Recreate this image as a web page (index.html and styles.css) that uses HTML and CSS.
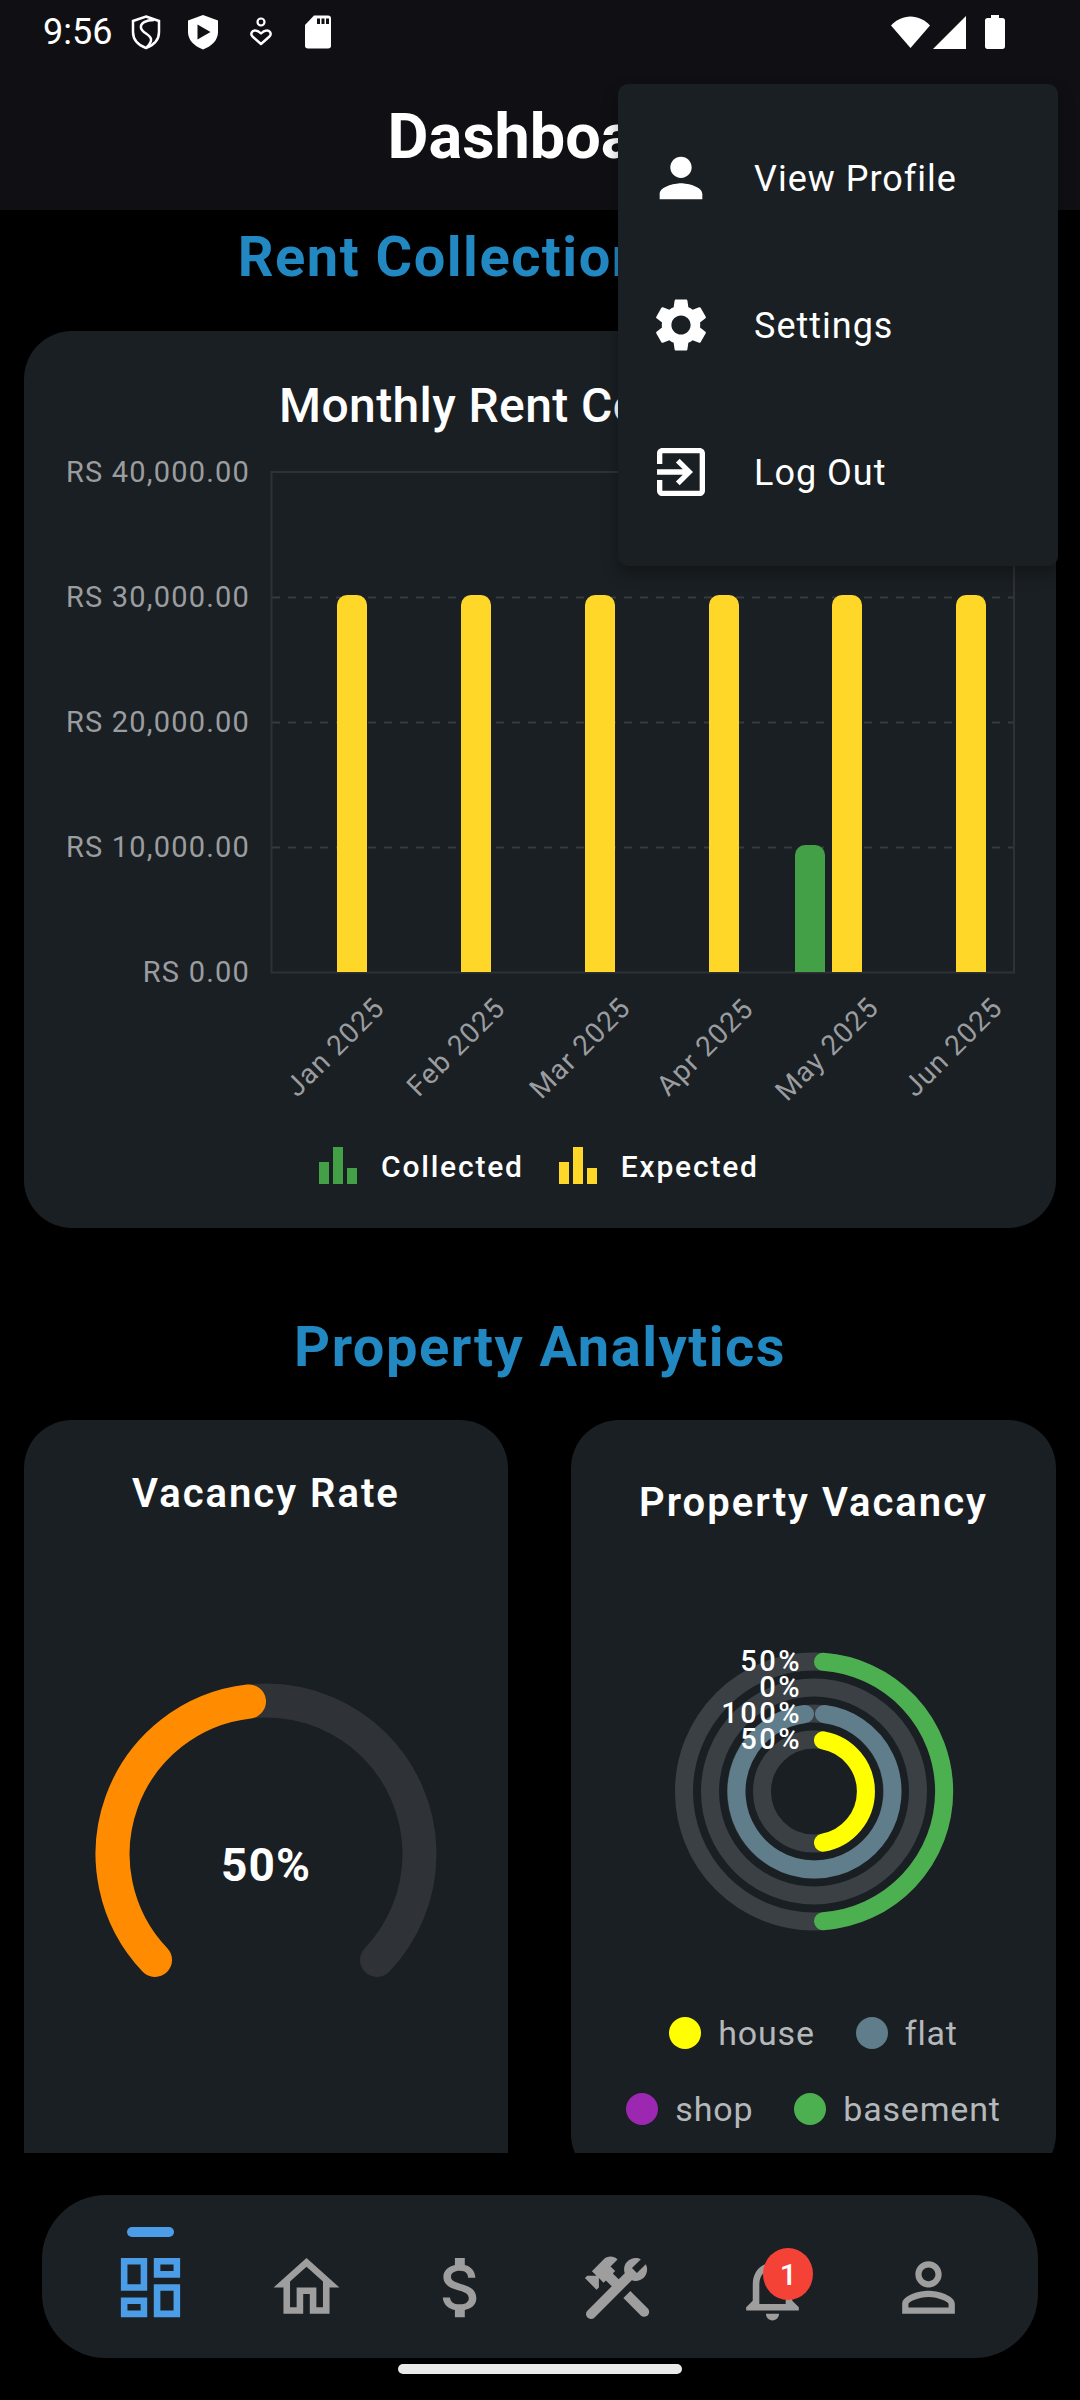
FILE: index.html
```html
<!doctype html>
<html lang="en">
<head>
  <meta charset="UTF-8">
  <title>Dashboard</title>
  <link rel="stylesheet" href="styles.css">
</head>
<body>
<div class="screen">
  <div class="header">
    <div class="status-bar">
      <span class="time">9:56</span>
      <svg class="status-icon" viewBox="0 0 40 36">
        <path d="M20 2.5L33 7V18C33 25.500 28 31 20 34C12 31 7 25.500 7 18V7Z" fill="none" stroke="#fff" stroke-width="2.500"/>
        <path d="M28 6C20 6 14 9 15 14C16 19 24 20 25 25C25.500 28 23 31 21 33" fill="none" stroke="#fff" stroke-width="2.500"/>
      </svg>
      <svg class="status-icon" viewBox="0 0 40 36">
        <path d="M20 1L35 6.500V18C35 26 29 32 20 35.500C11 32 5 26 5 18V6.500Z" fill="#fff"/>
        <path d="M14.500 10.500L27.500 18L14.500 25.500Z" fill="#101014"/>
      </svg>
      <svg class="status-icon" viewBox="0 0 40 36">
        <circle cx="20" cy="8" r="3.500" fill="none" stroke="#fff" stroke-width="2.200"/>
        <path d="M20 30L11.500 22.500C9 20 11 16 14.500 16.500C17 16.800 18.500 18 20 19.500C21.500 18 23 16.800 25.500 16.500C29 16 31 20 28.500 22.500Z" fill="none" stroke="#fff" stroke-width="2.400" stroke-linejoin="round"/>
      </svg>
      <svg class="status-icon" viewBox="0 0 40 36">
        <path d="M16 1.500H30C32 1.500 33 2.500 33 4.500V32C33 33.500 32 34.500 30 34.500H10C8 34.500 7 33.500 7 32V11Z" fill="#fff"/>
        <path d="M19 4.500H22V10H19ZM23.500 4.500H26.500V10H23.500ZM28 4.500H31V10H28Z" fill="#101014"/>
      </svg>
      <div class="status-right">
        <svg class="wifi" viewBox="0 0 39 32"><path d="M0 9.500C5 4 12 0.500 19.500 0.500C27 0.500 34 4 39 9.500L19.500 32Z" fill="#fff"/></svg>
        <svg class="signal" viewBox="0 0 33 33"><path d="M33 0V33H0Z" fill="#fff"/></svg>
        <svg class="battery" viewBox="0 0 20 34"><path d="M6 0H14V3H17.500C19 3 20 4 20 5.500V31.500C20 33 19 34 17.500 34H2.500C1 34 0 33 0 31.500V5.500C0 4 1 3 2.500 3H6Z" fill="#fff"/></svg>
      </div>
    </div>
    <div class="app-bar">Dashboard</div>
  </div>

  <div class="scroll">
    <h2 class="section-title first">Rent Collection Trends</h2>
    <div class="card chart-card">
      <h3 class="chart-title">Monthly Rent Collection</h3>
      <svg class="bar-chart" viewBox="24 450 1032 680">
        <defs>
          <clipPath id="plot-clip"><rect x="272" y="472" width="742" height="500"/></clipPath>
        </defs>
        <g class="grid">
          <line x1="272" x2="1014" y1="597.500" y2="597.500"/>
          <line x1="272" x2="1014" y1="722.500" y2="722.500"/>
          <line x1="272" x2="1014" y1="847.500" y2="847.500"/>
        </g>
        <rect class="plot-border" x="271.500" y="472" width="742.500" height="500.500"/>
        <g class="y-labels">
          <text x="250" y="472">RS 40,000.00</text>
          <text x="250" y="597">RS 30,000.00</text>
          <text x="250" y="722">RS 20,000.00</text>
          <text x="250" y="847">RS 10,000.00</text>
          <text x="250" y="972">RS 0.00</text>
        </g>
        <g clip-path="url(#plot-clip)">
          <rect class="bar-expected" x="337" y="595" width="30" height="400" rx="10"/>
          <rect class="bar-expected" x="461" y="595" width="30" height="400" rx="10"/>
          <rect class="bar-expected" x="585" y="595" width="30" height="400" rx="10"/>
          <rect class="bar-expected" x="709" y="595" width="30" height="400" rx="10"/>
          <rect class="bar-collected" x="795" y="845" width="30" height="150" rx="10"/>
          <rect class="bar-expected" x="832" y="595" width="30" height="400" rx="10"/>
          <rect class="bar-expected" x="956" y="595" width="30" height="400" rx="10"/>
        </g>
        <g class="x-labels">
          <text transform="rotate(-45 335 1047)" x="335" y="1047">Jan 2025</text>
          <text transform="rotate(-45 456 1047)" x="456" y="1047">Feb 2025</text>
          <text transform="rotate(-45 580 1048)" x="580" y="1048">Mar 2025</text>
          <text transform="rotate(-45 705 1047)" x="705" y="1047">Apr 2025</text>
          <text transform="rotate(-45 827 1049)" x="827" y="1049">May 2025</text>
          <text transform="rotate(-45 953 1047)" x="953" y="1047">Jun 2025</text>
        </g>
      </svg>
      <div class="bar-legend">
        <div class="bar-legend-item">
          <svg class="bar-legend-icon collected" viewBox="0 0 38 37"><path d="M0 15H10V37H0ZM14 0H24V37H14ZM28 21H38V37H28Z"/></svg>
          <span>Collected</span>
        </div>
        <div class="bar-legend-item">
          <svg class="bar-legend-icon expected" viewBox="0 0 38 37"><path d="M0 15H10V37H0ZM14 0H24V37H14ZM28 21H38V37H28Z"/></svg>
          <span>Expected</span>
        </div>
      </div>
    </div>

    <h2 class="section-title second">Property Analytics</h2>
    <div class="analytics">
      <div class="card vacancy-card">
        <h3 class="small-title">Vacancy Rate</h3>
        <svg class="gauge" viewBox="24 1660 484 340">
          <path class="gauge-track" d="M155 1960A153.500 153.500 0 1 1 377 1960"/>
          <path class="gauge-value" d="M155 1960A153.500 153.500 0 0 1 249 1701.500"/>
          <text class="gauge-text" x="266" y="1865">50%</text>
        </svg>
      </div>
      <div class="card property-card">
        <h3 class="small-title">Property Vacancy</h3>
        <svg class="radial" viewBox="571 1640 485 310">
          <circle class="ring-track" cx="814" cy="1791.500" r="130"/>
          <circle class="ring-track" cx="814" cy="1791.500" r="104"/>
          <circle class="ring-track" cx="814" cy="1791.500" r="78"/>
          <circle class="ring-track" cx="814" cy="1791.500" r="52"/>
          <path class="ring basement" d="M823 1661.800A130 130 0 0 1 823 1921.200"/>
          <path class="ring flat" d="M824 1714A78 78 0 1 1 805 1714"/>
          <path class="ring house" d="M823 1740.300A52 52 0 0 1 823 1842.700"/>
          <g class="ring-labels">
            <text x="802" y="1661">50%</text>
            <text x="802" y="1687">0%</text>
            <text x="802" y="1712.500">100%</text>
            <text x="802" y="1738.500">50%</text>
          </g>
        </svg>
        <div class="legend-row first-row">
          <div class="legend-item"><i class="dot dot-house"></i>house</div>
          <div class="legend-item"><i class="dot dot-flat"></i>flat</div>
        </div>
        <div class="legend-row">
          <div class="legend-item"><i class="dot dot-shop"></i>shop</div>
          <div class="legend-item"><i class="dot dot-basement"></i>basement</div>
        </div>
      </div>
    </div>
  </div>

  <div class="bottom-nav">
    <div class="nav-item active">
      <div class="nav-mark"></div>
      <svg class="nav-icon" viewBox="0 0 24 24"><path d="M19 5v2h-4V5h4M9 5v6H5V5h4m10 8v6h-4v-6h4M9 17v2H5v-2h4M21 3h-8v6h8V3zM11 3H3v10h8V3zm10 8h-8v10h8V11zm-10 4H3v6h8v-6z"/></svg>
    </div>
    <div class="nav-item">
      <div class="nav-mark"></div>
      <svg class="nav-icon" viewBox="0 0 24 24"><path d="M12 5.690l5 4.500V18h-2v-6H9v6H7v-7.810l5-4.500M12 3L2 12h3v8h6v-6h2v6h6v-8h3L12 3z"/></svg>
    </div>
    <div class="nav-item">
      <div class="nav-mark"></div>
      <svg class="nav-icon" viewBox="0 0 24 24"><path d="M11.800 10.900c-2.270-.590-3-1.200-3-2.150 0-1.090 1.010-1.850 2.700-1.850 1.780 0 2.440.850 2.500 2.100h2.210c-.070-1.720-1.120-3.300-3.210-3.810V3h-3v2.160c-1.940.420-3.500 1.680-3.500 3.610 0 2.310 1.910 3.460 4.700 4.130 2.500.600 3 1.480 3 2.410 0 .690-.490 1.790-2.700 1.790-2.060 0-2.870-.920-2.980-2.100h-2.200c.120 2.190 1.760 3.420 3.680 3.830V21h3v-2.150c1.950-.370 3.500-1.500 3.500-3.550 0-2.840-2.430-3.810-4.700-4.400z"/></svg>
    </div>
    <div class="nav-item">
      <div class="nav-mark"></div>
      <svg class="nav-icon" viewBox="0 0 24 24"><path d="M13.783 15.172l2.121-2.121 5.300 5.300a1.500 1.500 0 0 1-2.121 2.121z"/><path d="M17.500 10c1.930 0 3.500-1.570 3.500-3.500 0-.580-.160-1.120-.410-1.600l-2.700 2.700-1.490-1.490 2.700-2.700c-.480-.250-1.020-.410-1.600-.410C15.570 3 14 4.570 14 6.500c0 .410.080.800.210 1.160l-1.850 1.850-1.780-1.780.710-.710-1.410-1.410L12 3.490c-1.170-1.170-3.070-1.170-4.240 0L4.220 7.030l1.410 1.410H2.810l-.710.710 3.540 3.540.710-.710V9.150l1.410 1.410.710-.710 1.780 1.780-7.410 7.410a1.500 1.500 0 0 0 2.120 2.120L16.340 9.790c.360.130.750.210 1.160.210z"/></svg>
    </div>
    <div class="nav-item">
      <div class="nav-mark"></div>
      <svg class="nav-icon" viewBox="0 0 24 24"><path d="M12 22c1.100 0 2-.900 2-2h-4c0 1.100.900 2 2 2zm6-6v-5c0-3.070-1.630-5.640-4.500-6.320V4c0-.830-.670-1.500-1.500-1.500s-1.500.670-1.500 1.500v.680C7.640 5.360 6 7.920 6 11v5l-2 2v1h16v-1l-2-2zm-2 1H8v-6c0-2.480 1.510-4.500 4-4.500s4 2.020 4 4.500v6z"/></svg>
      <span class="badge">1</span>
    </div>
    <div class="nav-item">
      <div class="nav-mark"></div>
      <svg class="nav-icon" viewBox="0 0 24 24"><path d="M12 5.900c1.160 0 2.100.940 2.100 2.100s-.940 2.100-2.100 2.100S9.900 9.160 9.900 8s.940-2.100 2.100-2.100m0 9c2.970 0 6.100 1.460 6.100 2.100v1.100H5.900V17c0-.640 3.130-2.100 6.100-2.100M12 4C9.790 4 8 5.790 8 8s1.790 4 4 4 4-1.790 4-4-1.790-4-4-4zm0 9c-2.670 0-8 1.340-8 4v3h16v-3c0-2.660-5.330-4-8-4z"/></svg>
    </div>
  </div>
  <div class="home-area"><div class="home-bar"></div></div>

  <div class="menu">
    <div class="menu-item">
      <svg class="menu-icon" viewBox="0 0 24 24"><path d="M12 12c2.210 0 4-1.790 4-4s-1.790-4-4-4-4 1.790-4 4 1.790 4 4 4zm0 2c-2.670 0-8 1.340-8 4v2h16v-2c0-2.660-5.330-4-8-4z"/></svg>
      <span>View Profile</span>
    </div>
    <div class="menu-item">
      <svg class="menu-icon" viewBox="0 0 24 24"><path d="M19.140 12.940c.040-.300.060-.610.060-.940 0-.320-.020-.640-.070-.940l2.030-1.580c.180-.140.230-.410.120-.610l-1.920-3.320c-.120-.220-.370-.290-.590-.220l-2.390.960c-.500-.380-1.030-.700-1.620-.940l-.360-2.540c-.040-.240-.240-.410-.480-.410h-3.840c-.240 0-.430.170-.470.410l-.360 2.540c-.590.240-1.130.570-1.620.940l-2.390-.960c-.220-.080-.470 0-.590.220L2.740 8.870c-.120.210-.080.470.120.610l2.030 1.580c-.050.300-.090.630-.090.940s.020.640.070.940l-2.030 1.580c-.180.140-.230.410-.12.610l1.920 3.320c.120.220.370.290.590.220l2.390-.960c.500.380 1.030.700 1.620.940l.360 2.540c.050.240.240.410.480.410h3.840c.240 0 .440-.170.470-.410l.360-2.540c.590-.240 1.130-.560 1.620-.940l2.390.960c.220.080.470 0 .590-.220l1.920-3.320c.120-.220.070-.470-.120-.61l-2.010-1.580zM12 15.600c-1.980 0-3.600-1.620-3.600-3.600s1.620-3.600 3.600-3.600 3.600 1.620 3.600 3.600-1.620 3.600-3.600 3.600z"/></svg>
      <span>Settings</span>
    </div>
    <div class="menu-item">
      <svg class="menu-icon" viewBox="0 0 24 24"><path d="M10.090 15.590L11.500 17l5-5-5-5-1.410 1.410L12.670 11H3v2h9.670l-2.580 2.590zM19 3H5c-1.110 0-2 .900-2 2v4h2V5h14v14H5v-4H3v4c0 1.100.890 2 2 2h14c1.100 0 2-.900 2-2V5c0-1.100-.900-2-2-2z"/></svg>
      <span>Log Out</span>
    </div>
  </div>
</div>
</body>
</html>
```
FILE: styles.css
```css
* {
  box-sizing: border-box;
}
body {
  margin: 0;
  background-color: #000;
  font-family: Roboto, "Liberation Sans", sans-serif;
  color: #fff;
}
.screen {
  position: relative;
  width: 1080px;
  height: 2400px;
  display: flex;
  flex-direction: column;
  overflow: hidden;
}

/* status bar + app bar */
.header {
  height: 210px;
  flex-shrink: 0;
  background-color: #101014;
}
.status-bar {
  height: 64px;
  display: flex;
  align-items: center;
  gap: 17.5px;
  padding: 0 75px 0 43px;
}
.time {
  font-size: 36px;
  margin-right: -4px;
  width: 69px;
}
.status-icon {
  width: 40px;
  height: 36px;
}
.status-right {
  margin-left: auto;
  display: flex;
  align-items: center;
  gap: 3px;
}
.wifi {
  width: 39px;
  height: 32px;
}
.signal {
  width: 33px;
  height: 33px;
}
.battery {
  width: 20px;
  height: 34px;
  margin-left: 16px;
}
.app-bar {
  height: 144px;
  display: flex;
  align-items: center;
  justify-content: center;
  font-size: 63px;
  font-weight: 700;
}

/* scrolling content */
.scroll {
  flex: 1;
  min-height: 0;
  overflow: hidden;
  padding: 12px 24px 0;
}
.section-title {
  height: 70px;
  margin: 0;
  display: flex;
  align-items: center;
  justify-content: center;
  font-size: 56px;
  font-weight: 700;
  letter-spacing: 1.5px;
  white-space: nowrap;
  color: #2288c2;
}
.section-title.first {
  margin-bottom: 39px;
}
.section-title.second {
  margin: 84px 0 38px;
}
.card {
  background-color: #1a1f23;
  border-radius: 48px;
}
.chart-card {
  height: 897px;
  padding-top: 44px;
}
.chart-title {
  height: 60px;
  margin: 0 0 15px;
  display: flex;
  align-items: center;
  justify-content: center;
  font-size: 48px;
  font-weight: 500;
  letter-spacing: .4px;
}
.bar-chart {
  display: block;
  width: 1032px;
  height: 680px;
}
.grid line {
  stroke: #363b3e;
  stroke-width: 2;
  stroke-dasharray: 8 8;
}
.plot-border {
  fill: none;
  stroke: #2f3136;
  stroke-width: 2;
}
.y-labels text {
  fill: #9a9da0;
  font-size: 29px;
  letter-spacing: 1.2px;
  text-anchor: end;
  dominant-baseline: central;
}
.x-labels text {
  fill: #9a9da0;
  font-size: 28px;
  letter-spacing: 1.2px;
  text-anchor: middle;
  dominant-baseline: central;
}
.bar-expected {
  fill: #ffd729;
}
.bar-collected {
  fill: #43a047;
}
.bar-legend {
  margin-top: 16px;
  height: 38px;
  display: flex;
  padding-left: 295px;
  gap: 35px;
}
.bar-legend-item {
  display: flex;
  align-items: center;
  gap: 24px;
  font-size: 30px;
  font-weight: 500;
  letter-spacing: 1.8px;
}
.bar-legend-item span {
  padding-top: 2px;
}
.bar-legend-icon {
  width: 38px;
  height: 37px;
}
.collected {
  fill: #43a047;
}
.expected {
  fill: #ffd729;
}

/* two small cards */
.analytics {
  display: grid;
  grid-template-columns: 484px 485px;
  column-gap: 63px;
  align-items: start;
}
.vacancy-card {
  min-height: 840px;
  padding-top: 48px;
}
.property-card {
  height: 762px;
  padding-top: 57px;
}
.small-title {
  height: 50px;
  margin: 0;
  display: flex;
  align-items: center;
  justify-content: center;
  font-size: 40px;
  font-weight: 600;
  letter-spacing: 2px;
}
.gauge {
  display: block;
  width: 484px;
  height: 340px;
  margin-top: 142px;
}
.gauge-track,
.gauge-value {
  fill: none;
  stroke-width: 34;
  stroke-linecap: round;
}
.gauge-track {
  stroke: #2f3337;
}
.gauge-value {
  stroke: #ff8c00;
}
.gauge-text {
  fill: #fff;
  font-size: 46px;
  font-weight: 700;
  letter-spacing: 1px;
  text-anchor: middle;
  dominant-baseline: central;
}
.radial {
  display: block;
  width: 485px;
  height: 310px;
  margin-top: 113px;
}
.ring-track,
.ring {
  fill: none;
  stroke-width: 18;
}
.ring-track {
  stroke: #3a4044;
}
.ring {
  stroke-linecap: round;
}
.basement {
  stroke: #4caf50;
}
.flat {
  stroke: #607d8b;
}
.house {
  stroke: #ffff00;
}
.ring-labels text {
  fill: #fff;
  font-size: 29px;
  font-weight: 500;
  letter-spacing: 2.5px;
  text-anchor: end;
  dominant-baseline: central;
}
.legend-row {
  height: 46px;
  margin-top: 30px;
  display: flex;
  justify-content: center;
  gap: 41px;
}
.legend-row.first-row {
  margin-top: 60px;
}
.legend-item {
  display: flex;
  align-items: center;
  gap: 17px;
  font-size: 34px;
  letter-spacing: .8px;
  color: #b5b8ba;
}
.dot {
  width: 32px;
  height: 32px;
  border-radius: 50%;
}
.dot-house {
  background-color: #ffff00;
}
.dot-flat {
  background-color: #607d8b;
}
.dot-shop {
  background-color: #9c27b0;
}
.dot-basement {
  background-color: #4caf50;
}

/* bottom navigation */
.bottom-nav {
  flex-shrink: 0;
  height: 163px;
  margin: 42px 42px 0;
  padding: 32px 70px 0 69px;
  display: flex;
  justify-content: space-between;
  border-radius: 64px;
  background-color: #1b2024;
}
.nav-item {
  position: relative;
  width: 79px;
  fill: #9e9e9e;
}
.nav-item.active {
  fill: #4a9de6;
}
.nav-mark {
  width: 47px;
  height: 10px;
  margin: 0 auto 11px;
  border-radius: 5px;
}
.active .nav-mark {
  background-color: #4a9de6;
}
.nav-icon {
  display: block;
  width: 79px;
  height: 79px;
}
.badge {
  position: absolute;
  left: 30px;
  top: 21px;
  width: 50px;
  height: 52px;
  display: flex;
  align-items: center;
  justify-content: center;
  border-radius: 50%;
  background-color: #f44336;
  color: #fff;
  font-size: 30px;
  font-weight: 500;
}
.home-area {
  flex-shrink: 0;
  height: 42px;
  padding-top: 6px;
  display: flex;
  justify-content: center;
}
.home-bar {
  width: 284px;
  height: 10px;
  border-radius: 5px;
  background-color: #eaeaea;
}

/* popup menu */
.menu {
  position: absolute;
  top: 84px;
  left: 618px;
  width: 440px;
  height: 482px;
  padding: 20px 0;
  border-radius: 10px;
  background-color: #1a1f23;
  box-shadow: 0 8px 16px rgba(0, 0, 0, .3);
}
.menu-item {
  height: 147px;
  display: flex;
  align-items: center;
  gap: 41px;
  padding-left: 31px;
  font-size: 36px;
  letter-spacing: 1px;
}
.menu-item span {
  padding-top: 3px;
}
.menu-icon {
  width: 64px;
  height: 64px;
  fill: #fff;
}
```
